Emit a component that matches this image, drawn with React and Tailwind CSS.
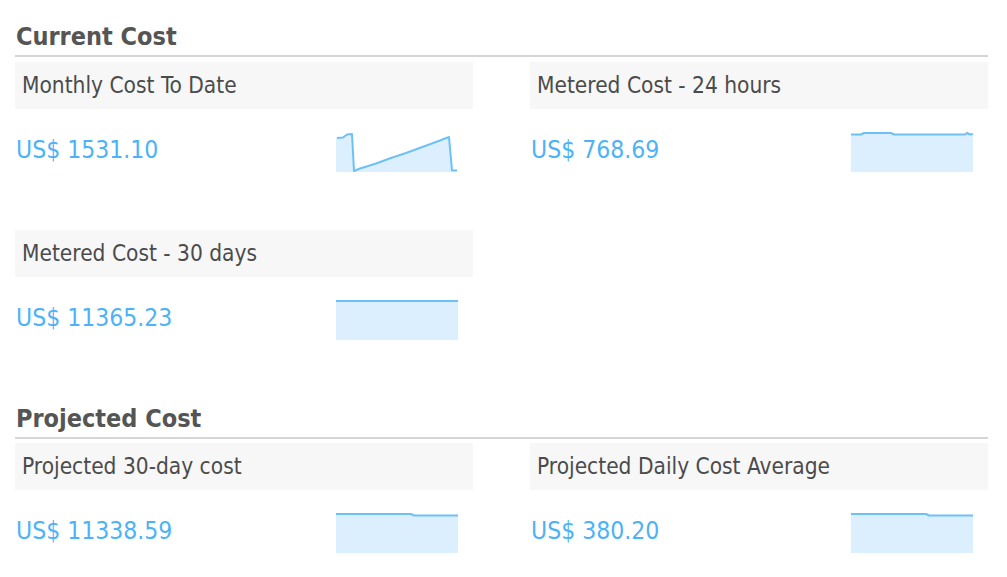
const font = { fontFamily: '"DejaVu Sans Condensed", "DejaVu Sans", Tahoma, sans-serif' };

function Spark({ line, area }) {
  return (
    <svg width="122" height="40" viewBox="0 0 122 40" className="block shrink-0">
      <path d={area} fill="#dcefff" />
      <path d={line} fill="none" stroke="#6dc1f7" strokeWidth="2" strokeLinejoin="round" />
    </svg>
  );
}

const sparks = {
  monthly: {
    line: 'M1 6 L7 5.5 L11 2.5 L16 2 L18 39 L24 36.5 L29 35 L40 31.5 L55 26 L70 21 L85 15.5 L100 10 L113 5 L116 38.5 L121 38.5',
    area: 'M0 6 L7 5.5 L11 2.5 L16 2 L18 39 L24 36.5 L29 35 L40 31.5 L55 26 L70 21 L85 15.5 L100 10 L113 5 L116 38.5 L116 40 L0 40 Z',
  },
  day: {
    line: 'M0 2.5 L10 2.5 L13 1 L40 1 L43 2.5 L114 2.5 L116 1 L119 2.5 L122 2',
    area: 'M0 2.5 L10 2.5 L13 1 L40 1 L43 2.5 L114 2.5 L116 1 L119 2.5 L122 2 L122 40 L0 40 Z',
  },
  flat: {
    line: 'M0 1 L122 1',
    area: 'M0 1 L122 1 L122 40 L0 40 Z',
  },
  step: {
    line: 'M0 1 L75 1 L78 2.5 L122 2.5',
    area: 'M0 1 L75 1 L78 2.5 L122 2.5 L122 40 L0 40 Z',
  },
};

function Card({ label, value, spark }) {
  return (
    <div>
      <div className="h-[47px] bg-[#f7f7f7] flex items-center px-[7px] text-[22.5px] text-[#4b4b4b]">
        {label}
      </div>
      <div className="mt-[23px] h-[40px] pr-[15px] flex items-center justify-between">
        <span className="text-[24.5px] text-[#4db3f6] pl-[1px] mb-[3px]">{value}</span>
        <Spark {...sparks[spark]} />
      </div>
    </div>
  );
}

function Heading({ children, className }) {
  return (
    <h2 className={`text-[25px] leading-[28px] font-bold text-[#555555] pl-[1px] pb-[4px] border-b-2 border-[#d5d5d5] ${className}`}>
      {children}
    </h2>
  );
}

export default function App() {
  return (
    <div className="w-[1007px] h-[577px] bg-white overflow-hidden pl-[15px]" style={font}>
      <div className="w-[973px]">
        <Heading className="pt-[23px]">Current Cost</Heading>
        <div className="grid grid-cols-2 gap-x-[57px] gap-y-[58px] mt-[5px]">
          <Card label="Monthly Cost To Date" value="US$ 1531.10" spark="monthly" />
          <Card label="Metered Cost - 24 hours" value="US$ 768.69" spark="day" />
          <Card label="Metered Cost - 30 days" value="US$ 11365.23" spark="flat" />
        </div>
        <Heading className="mt-[65px]">Projected Cost</Heading>
        <div className="grid grid-cols-2 gap-x-[57px] mt-[4px]">
          <Card label="Projected 30-day cost" value="US$ 11338.59" spark="step" />
          <Card label="Projected Daily Cost Average" value="US$ 380.20" spark="step" />
        </div>
      </div>
    </div>
  );
}
